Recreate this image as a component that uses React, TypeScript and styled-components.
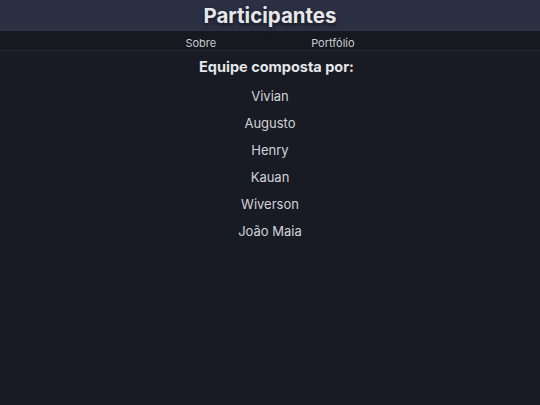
import React from 'react';
import styled, { createGlobalStyle } from 'styled-components';

const GlobalStyle = createGlobalStyle`
  html, body {
    margin: 0;
    padding: 0;
    background-color: #181b24;
  }
  body {
    font-family: Inter, "Open Sans", sans-serif;
    color: #dcdde0;
  }
`;

const Header = styled.header`
  background-color: #2b3043;
  height: 31px;
  display: flex;
  align-items: center;
  justify-content: center;
`;

const Title = styled.h1`
  margin: 0;
  font-size: 20.5px;
  font-weight: 700;
  color: #e6e7ea;
  text-shadow: 0 2px 4px rgba(0, 0, 0, 0.6);
`;

const Nav = styled.nav`
  background-color: #161920;
  border-bottom: 1px solid #232734;
  height: 19px;
`;

const MenuItems = styled.ul`
  display: flex;
  justify-content: center;
  align-items: center;
  gap: 95px;
  list-style: none;
  margin: 0;
  padding: 0;
  height: 100%;
`;

const MenuLink = styled.a`
  color: #c9cacf;
  text-decoration: none;
  font-size: 11px;
`;

const Main = styled.main`
  display: flex;
  flex-direction: column;
  align-items: center;
  padding-top: 6px;
`;

const Heading = styled.h2`
  margin: 0 0 6px;
  padding-left: 13px;
  font-size: 14.5px;
  font-weight: 700;
  color: #e4e5e8;
  line-height: 20px;
`;

const Member = styled.p`
  margin: 0;
  font-size: 13px;
  line-height: 27px;
  color: #d2d3d7;
`;

const members = ['Vivian', 'Augusto', 'Henry', 'Kauan', 'Wiverson', 'João Maia'];

const App = () => {
  return (
    <>
      <GlobalStyle />
      <Header>
        <Title>Participantes</Title>
      </Header>
      <Nav>
        <MenuItems>
          <li>
            <MenuLink href="#sobre">Sobre</MenuLink>
          </li>
          <li>
            <MenuLink href="#portfolio">Portfólio</MenuLink>
          </li>
        </MenuItems>
      </Nav>
      <Main>
        <Heading>Equipe composta por:</Heading>
        {members.map((name) => (
          <Member key={name}>{name}</Member>
        ))}
      </Main>
    </>
  );
};

export default App;
